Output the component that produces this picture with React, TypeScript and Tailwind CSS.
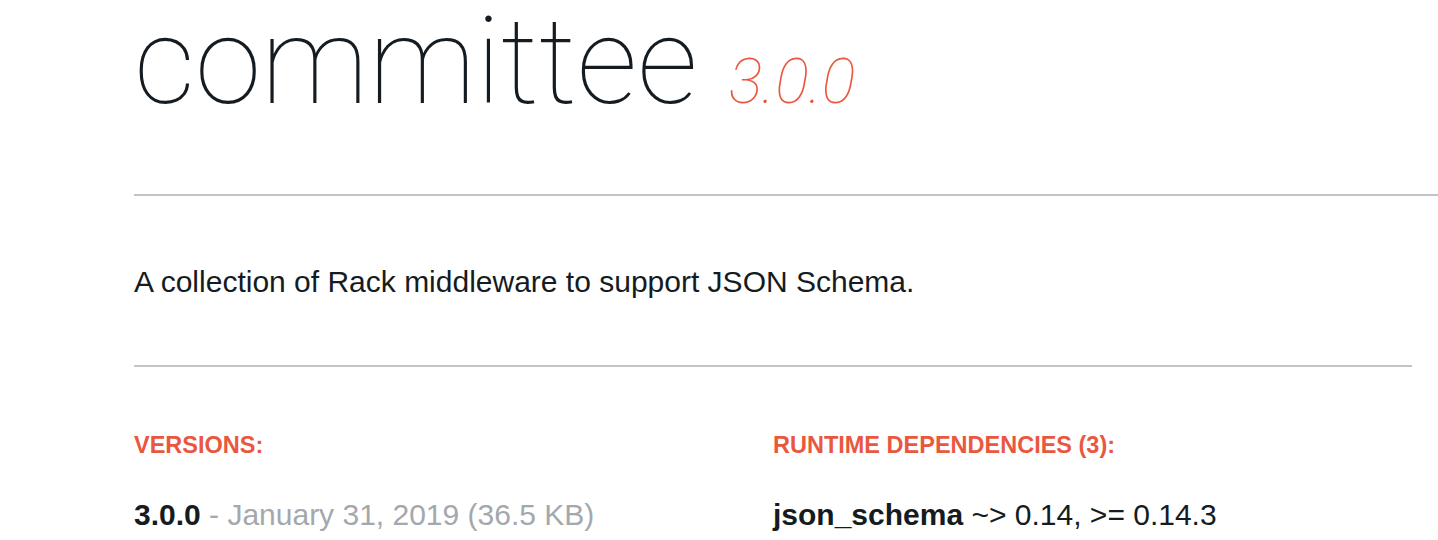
import React from 'react';

const App: React.FC = () => {
  return (
    <div className="min-h-[540px] bg-white pl-[134px] font-['Liberation_Sans',Arial,sans-serif] text-[#141c22]">
      {/* Gem title */}
      <h1 className="flex items-baseline pt-[2px] font-['Roboto',sans-serif] font-thin">
        <span className="text-[120px] leading-[120px]">committee</span>
        <span className="ml-[31px] text-[63px] italic leading-none text-[#e9573f]">3.0.0</span>
      </h1>

      <hr className="mt-[72px] border-t-2 border-[#c1c4c8]" />

      <div className="mr-[26px]">
        {/* Description */}
        <p className="mt-[68px] text-[30px] leading-[36px]">
          A collection of Rack middleware to support JSON Schema.
        </p>

        <hr className="mt-[65px] border-t-2 border-[#c1c4c8]" />

        {/* Versions / dependencies */}
        <div className="grid grid-cols-2 pt-[65px]">
          <div>
            <h2 className="text-[23.5px] font-bold uppercase leading-[26px] text-[#e9573f]">Versions:</h2>
            <p className="mt-[39px] text-[30px] leading-[36px]">
              <span className="font-bold">3.0.0</span>
              <span className="text-[#a3a8ae]"> - January 31, 2019 (36.5 KB)</span>
            </p>
          </div>
          <div>
            <h2 className="text-[23.5px] font-bold uppercase leading-[26px] text-[#e9573f]">
              Runtime Dependencies (3):
            </h2>
            <p className="mt-[39px] text-[30px] leading-[36px]">
              <span className="font-bold">json_schema</span> ~&gt; 0.14, &gt;= 0.14.3
            </p>
          </div>
        </div>
      </div>
    </div>
  );
};

export default App;
